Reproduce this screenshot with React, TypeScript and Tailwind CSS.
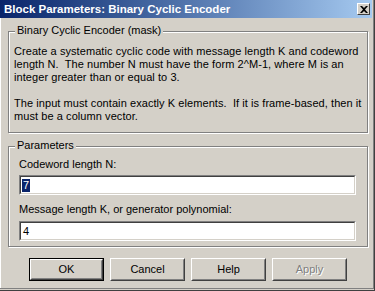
import React from 'react';

const font = "font-['Liberation_Sans',Arial,sans-serif]";

function GroupBox({ label, className, children }: { label: string; className?: string; children: React.ReactNode }) {
  return (
    <div className={`relative border border-[#808080] shadow-[inset_1px_1px_0_#ffffff,1px_1px_0_#ffffff] ${className ?? ''}`}>
      <span className="absolute left-[6px] top-[-8px] bg-[#d4d0c8] px-[2px] text-[11px] leading-[13px] text-black">
        {label}
      </span>
      {children}
    </div>
  );
}

function Field({ value, selected }: { value: string; selected?: boolean }) {
  return (
    <div className="h-[20px] w-[337px] border border-t-[#808080] border-l-[#808080] border-b-white border-r-white">
      <div className="h-full w-full border border-t-[#404040] border-l-[#404040] border-b-[#d4d0c8] border-r-[#d4d0c8] bg-white pl-[1px] flex items-center">
        <span className={`px-[1px] text-[11px] leading-[13px] ${selected ? 'bg-[#0a246a] text-white' : 'text-black'}`}>{value}</span>
      </div>
    </div>
  );
}

function Btn({ label, primary, disabled }: { label: string; primary?: boolean; disabled?: boolean }) {
  return (
    <div className={`h-[23px] w-[75px] ${primary ? 'border border-black' : ''}`}>
      <div className="h-full w-full border border-t-white border-l-white border-b-[#404040] border-r-[#404040]">
        <div className="flex h-full w-full items-center justify-center border border-t-[#d4d0c8] border-l-[#d4d0c8] border-b-[#808080] border-r-[#808080] text-[11px]">
          {disabled ? (
            <span className="text-[#808080] [text-shadow:1px_1px_0_#ffffff]">{label}</span>
          ) : (
            <span className="text-black">{label}</span>
          )}
        </div>
      </div>
    </div>
  );
}

export default function App() {
  return (
    <div className={`h-[291px] w-[375px] overflow-hidden bg-[#d4d0c8] ${font}`}>
      <div className="flex h-[291px] w-[375px] flex-col border-r border-b border-r-[#404040] border-b-[#404040]">
        <div className="flex h-[289px] flex-col border-r border-b border-r-[#808080] border-b-[#808080]">
          {/* Title bar */}
          <div className="flex h-[18px] w-[372px] items-center justify-between bg-gradient-to-r from-[#0a246a] to-[#a6caf0] pl-[4px] pr-[2px]">
            <span className="text-[11.5px] font-bold leading-[14px] text-white">Block Parameters: Binary Cyclic Encoder</span>
            <div className="flex h-[12px] w-[13px] items-center justify-center border border-t-white border-l-white border-b-[#404040] border-r-[#404040] bg-[#d4d0c8]">
              <svg width="8" height="7" viewBox="0 0 8 7">
                <path d="M0 0h2l2 2 2-2h2L5 3.5 8 7H6L4 5 2 7H0l3-3.5z" fill="#000" />
              </svg>
            </div>
          </div>

          <div className="flex flex-1 flex-col border-l border-white pl-[7px] pr-[5px] pt-[13px]">
            <GroupBox label="Binary Cyclic Encoder (mask)" className="h-[102px]">
              <div className="pl-[5px] pr-[4px] pt-[13px] text-[11px] leading-[13px] tracking-[0.07px] text-black">
                <p>
                  Create a systematic cyclic code with message length K and codeword length N.&nbsp; The number N must have the form 2^M-1, where M is an integer greater than or equal to 3.
                </p>
                <p className="mt-[13px]">
                  The input must contain exactly K elements.&nbsp; If it is frame-based, then it must be a column vector.
                </p>
              </div>
            </GroupBox>

            <GroupBox label="Parameters" className="mt-[13px] h-[101px]">
              <div className="flex flex-col pl-[10px] pt-[11px] text-[11px] leading-[13px] text-black">
                <span>Codeword length N:</span>
                <div className="mt-[4px]">
                  <Field value="7" selected />
                </div>
                <span className="mt-[8px]">Message length K, or generator polynomial:</span>
                <div className="mt-[5px]">
                  <Field value="4" />
                </div>
              </div>
            </GroupBox>

            <div className="mt-[11px] flex gap-[6px] pl-[21px]">
              <Btn label="OK" primary />
              <Btn label="Cancel" />
              <Btn label="Help" />
              <Btn label="Apply" disabled />
            </div>
          </div>
        </div>
      </div>
    </div>
  );
}
